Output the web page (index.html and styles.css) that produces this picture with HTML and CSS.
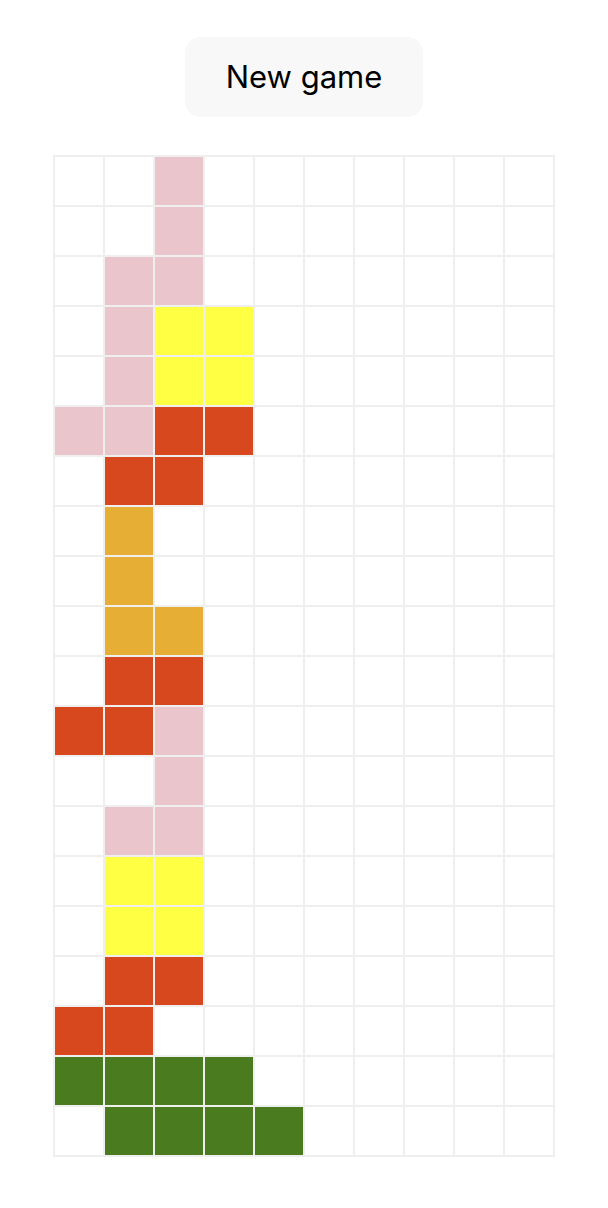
FILE: index.html
```html
<!DOCTYPE html>
<html>
<head>
<meta charset="utf-8">
<link rel="stylesheet" href="styles.css">
</head>
<body>
<main class="app">
  <button class="new-game">New game</button>
  <div class="board">
    <div class="c"></div><div class="c"></div><div class="c p"></div><div class="c"></div><div class="c"></div><div class="c"></div><div class="c"></div><div class="c"></div><div class="c"></div><div class="c"></div>
    <div class="c"></div><div class="c"></div><div class="c p"></div><div class="c"></div><div class="c"></div><div class="c"></div><div class="c"></div><div class="c"></div><div class="c"></div><div class="c"></div>
    <div class="c"></div><div class="c p"></div><div class="c p"></div><div class="c"></div><div class="c"></div><div class="c"></div><div class="c"></div><div class="c"></div><div class="c"></div><div class="c"></div>
    <div class="c"></div><div class="c p"></div><div class="c y"></div><div class="c y"></div><div class="c"></div><div class="c"></div><div class="c"></div><div class="c"></div><div class="c"></div><div class="c"></div>
    <div class="c"></div><div class="c p"></div><div class="c y"></div><div class="c y"></div><div class="c"></div><div class="c"></div><div class="c"></div><div class="c"></div><div class="c"></div><div class="c"></div>
    <div class="c p"></div><div class="c p"></div><div class="c r"></div><div class="c r"></div><div class="c"></div><div class="c"></div><div class="c"></div><div class="c"></div><div class="c"></div><div class="c"></div>
    <div class="c"></div><div class="c r"></div><div class="c r"></div><div class="c"></div><div class="c"></div><div class="c"></div><div class="c"></div><div class="c"></div><div class="c"></div><div class="c"></div>
    <div class="c"></div><div class="c o"></div><div class="c"></div><div class="c"></div><div class="c"></div><div class="c"></div><div class="c"></div><div class="c"></div><div class="c"></div><div class="c"></div>
    <div class="c"></div><div class="c o"></div><div class="c"></div><div class="c"></div><div class="c"></div><div class="c"></div><div class="c"></div><div class="c"></div><div class="c"></div><div class="c"></div>
    <div class="c"></div><div class="c o"></div><div class="c o"></div><div class="c"></div><div class="c"></div><div class="c"></div><div class="c"></div><div class="c"></div><div class="c"></div><div class="c"></div>
    <div class="c"></div><div class="c r"></div><div class="c r"></div><div class="c"></div><div class="c"></div><div class="c"></div><div class="c"></div><div class="c"></div><div class="c"></div><div class="c"></div>
    <div class="c r"></div><div class="c r"></div><div class="c p"></div><div class="c"></div><div class="c"></div><div class="c"></div><div class="c"></div><div class="c"></div><div class="c"></div><div class="c"></div>
    <div class="c"></div><div class="c"></div><div class="c p"></div><div class="c"></div><div class="c"></div><div class="c"></div><div class="c"></div><div class="c"></div><div class="c"></div><div class="c"></div>
    <div class="c"></div><div class="c p"></div><div class="c p"></div><div class="c"></div><div class="c"></div><div class="c"></div><div class="c"></div><div class="c"></div><div class="c"></div><div class="c"></div>
    <div class="c"></div><div class="c y"></div><div class="c y"></div><div class="c"></div><div class="c"></div><div class="c"></div><div class="c"></div><div class="c"></div><div class="c"></div><div class="c"></div>
    <div class="c"></div><div class="c y"></div><div class="c y"></div><div class="c"></div><div class="c"></div><div class="c"></div><div class="c"></div><div class="c"></div><div class="c"></div><div class="c"></div>
    <div class="c"></div><div class="c r"></div><div class="c r"></div><div class="c"></div><div class="c"></div><div class="c"></div><div class="c"></div><div class="c"></div><div class="c"></div><div class="c"></div>
    <div class="c r"></div><div class="c r"></div><div class="c"></div><div class="c"></div><div class="c"></div><div class="c"></div><div class="c"></div><div class="c"></div><div class="c"></div><div class="c"></div>
    <div class="c g"></div><div class="c g"></div><div class="c g"></div><div class="c g"></div><div class="c"></div><div class="c"></div><div class="c"></div><div class="c"></div><div class="c"></div><div class="c"></div>
    <div class="c"></div><div class="c g"></div><div class="c g"></div><div class="c g"></div><div class="c g"></div><div class="c"></div><div class="c"></div><div class="c"></div><div class="c"></div><div class="c"></div>
  </div>
</main>
</body>
</html>
```

FILE: styles.css
```css
html, body {
  margin: 0;
  padding: 0;
  background: #ffffff;
}

.app {
  display: flex;
  flex-direction: column;
  align-items: center;
  gap: 38px;
  padding-top: 37px;
  font-family: Inter, "Liberation Sans", Arial, sans-serif;
}

.new-game {
  width: 238px;
  height: 80px;
  border: none;
  border-radius: 16px;
  background: #f8f8f8;
  color: #000000;
  font-family: Inter, "Liberation Sans", Arial, sans-serif;
  font-size: 31px;
  padding: 0 0 2px;
  cursor: pointer;
}

.board {
  display: grid;
  grid-template-columns: repeat(10, 50px);
  grid-auto-rows: 50px;
  border: 1px solid #efefef;
}

.c {
  box-sizing: border-box;
  border: 1px solid #efefef;
  background: #ffffff;
}

.p { background: #eac5cb; }
.y { background: #ffff44; }
.r { background: #d8481f; }
.o { background: #e6ae34; }
.g { background: #4a7b1e; }
```
